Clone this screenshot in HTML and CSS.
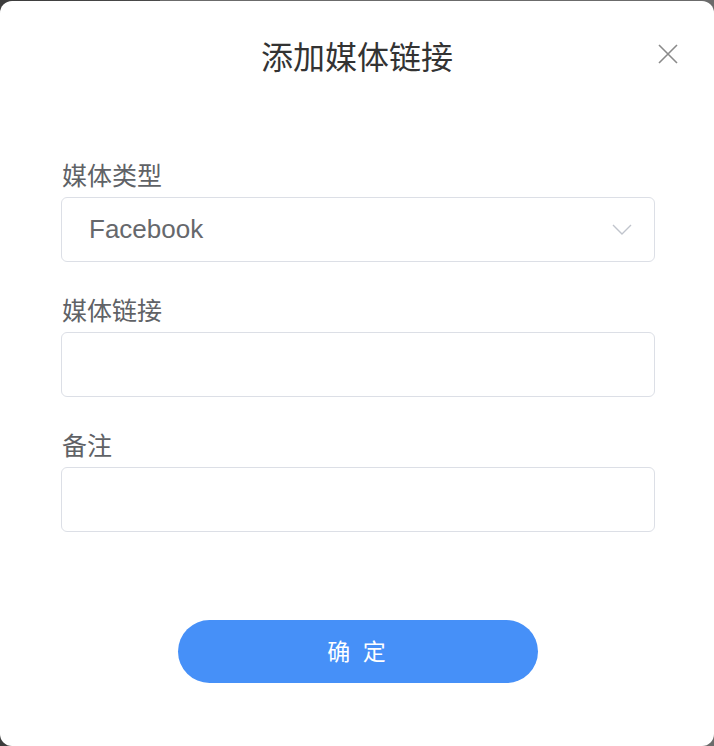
FILE: index.html
```html
<!DOCTYPE html>
<html lang="zh-CN">

<head>
    <meta charset="UTF-8">
    <meta name="viewport" content="width=device-width, initial-scale=1.0">
    <title>添加媒体链接</title>
    <link rel="stylesheet" href="styles.css">
</head>

<body>
    <div class="dialog">
        <header class="dialog_header">
            <p class="dialog_title">添加媒体链接</p>
            <button class="btn_close" type="button" aria-label="关闭">
                <svg width="20" height="20" viewBox="0 0 20 20">
                    <path d="M1 1 L19 19 M19 1 L1 19" stroke="#8a8a8a" stroke-width="1.6" fill="none"/>
                </svg>
            </button>
        </header>

        <form class="dialog_body">
            <div class="form_item">
                <p class="form_label">媒体类型</p>
                <div class="select">
                    <span class="select_value">Facebook</span>
                    <svg class="select_arrow" width="20" height="11" viewBox="0 0 20 11">
                        <path d="M1 1 L10 10 L19 1" stroke="#c0c4cc" stroke-width="1.4" fill="none"/>
                    </svg>
                </div>
            </div>
            <div class="form_item">
                <p class="form_label">媒体链接</p>
                <input class="input" type="text">
            </div>
            <div class="form_item">
                <p class="form_label">备注</p>
                <input class="input" type="text">
            </div>

            <button class="btn_confirm" type="submit">确 定</button>
        </form>
    </div>
</body>

</html>
```

FILE: styles.css
```css
* {
    margin: 0;
    padding: 0;
    box-sizing: border-box;
}
body{
    font-family: 'Liberation Sans', 'Noto Sans CJK SC', sans-serif;
    background: linear-gradient(to right, #3c3c3c 0, #4a4a4a 160px, #6b6b6b 160px);
    height: 746px;
    overflow: hidden;
}
.dialog{
    position: relative;
    margin-top: 1px;
    height: 745px;
    background-color: #ffffff;
    border-radius: 12px;
}
.dialog_header{
    padding-top: 35px;
    text-align: center;
}
.dialog_title{
    font-size: 32px;
    line-height: 44px;
    color: #333333;
}
.btn_close{
    position: absolute;
    top: 43px;
    right: 36px;
    width: 20px;
    height: 20px;
    border: none;
    background: none;
}
.btn_close svg{
    display: block;
}
.dialog_body{
    margin-top: 81px;
    padding: 0 59px 0 61px;
}
.form_item{
    margin-bottom: 34px;
}
.form_label{
    font-size: 25px;
    line-height: 30px;
    height: 30px;
    color: #606266;
    margin-bottom: 6px;
    padding-left: 1px;
}
.select, .input{
    display: block;
    width: 100%;
    height: 65px;
    border: 1px solid #dcdfe6;
    border-radius: 6px;
    background-color: #ffffff;
}
.select{
    display: flex;
    align-items: center;
    justify-content: space-between;
    padding: 0 22px 0 27px;
}
.select_value{
    font-size: 26px;
    color: #66686c;
}
.select_arrow{
    display: block;
}
.btn_confirm{
    display: block;
    width: 360px;
    height: 63px;
    margin: 88px auto 0;
    padding-bottom: 3px;
    border: none;
    border-radius: 32px;
    background-color: #4690f8;
    color: #ffffff;
    font-family: 'Liberation Sans', 'Noto Sans CJK SC', sans-serif;
    font-size: 23px;
    letter-spacing: 3px;
}
```
